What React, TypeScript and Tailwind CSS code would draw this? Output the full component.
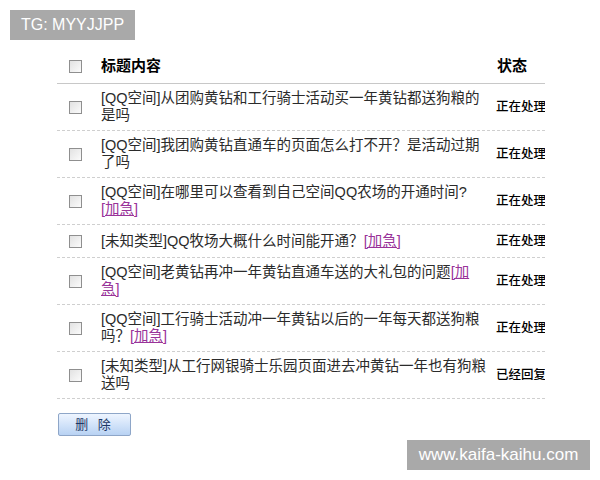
type Row = { first: React.ReactNode; second: React.ReactNode; status: string };

const Urgent = ({ children }: { children: React.ReactNode }) => (
  <a href="#" className="text-[#993399] underline">{children}</a>
);

const rows: Row[] = [
  { first: '[QQ空间]从团购黄钻和工行骑士活动买一年黄钻都送狗粮的', second: '是吗', status: '正在处理' },
  { first: '[QQ空间]我团购黄钻直通车的页面怎么打不开？是活动过期', second: '了吗', status: '正在处理' },
  { first: '[QQ空间]在哪里可以查看到自己空间QQ农场的开通时间?', second: <Urgent>[加急]</Urgent>, status: '正在处理' },
  { first: <>[未知类型]QQ牧场大概什么时间能开通？<Urgent>[加急]</Urgent></>, second: null, status: '正在处理' },
  {
    first: <>[QQ空间]老黄钻再冲一年黄钻直通车送的大礼包的问题<Urgent>[加</Urgent></>,
    second: <Urgent>急]</Urgent>,
    status: '正在处理',
  },
  { first: '[QQ空间]工行骑士活动冲一年黄钻以后的一年每天都送狗粮', second: <>吗？<Urgent>[加急]</Urgent></>, status: '正在处理' },
  { first: '[未知类型]从工行网银骑士乐园页面进去冲黄钻一年也有狗粮', second: '送吗', status: '已经回复' },
];

function Box() {
  return (
    <span className="block w-[13px] h-[13px] border border-[#8f8f8f] bg-gradient-to-br from-[#e2e2e2] to-[#fbfbfb]" />
  );
}

export default function App() {
  return (
    <div
      className="relative w-[600px] h-[480px] bg-white overflow-hidden"
      style={{ fontFamily: '"Liberation Sans", "Noto Sans CJK SC", sans-serif' }}
    >
      {/* watermark top */}
      <div className="absolute left-[10px] top-[10px] w-[125px] h-[30px] bg-[#a9a9a9] text-white text-[16px] leading-[30px] pl-[11px]">
        TG: MYYJJPP
      </div>

      <div className="pt-[50px] pl-[57px]">
        <div className="w-[488px] overflow-hidden">
          {/* header */}
          <div className="grid grid-cols-[44px_394px_1fr] items-center h-[34px] border-b border-[#c8c8c8]">
            <div className="pl-[12px]"><Box /></div>
            <div className="text-[15px] font-bold text-black">标题内容</div>
            <div className="pl-[2px] text-[15px] font-bold text-black whitespace-nowrap">状态</div>
          </div>

          {rows.map((r, i) => (
            <div
              key={i}
              className="grid grid-cols-[44px_394px_1fr] items-center min-h-[33px] py-[6px] border-b border-dashed border-[#cfcfcf]"
            >
              <div className="pl-[12px]"><Box /></div>
              <div className="text-[14.5px] leading-[17px] text-[#2b2b2b]">
                {r.first}
                {r.second && (
                  <>
                    <br />
                    {r.second}
                  </>
                )}
              </div>
              <div className="pl-[1px] text-[12.5px] font-medium text-black whitespace-nowrap">{r.status}</div>
            </div>
          ))}
        </div>

        <button className="mt-[14px] ml-px w-[73px] h-[23px] border border-[#8ea6c8] rounded-[2px] bg-gradient-to-b from-[#eef5ff] to-[#b8d2f3] text-[13px] text-[#1d3766] tracking-[3px]">
          删 除
        </button>
      </div>

      {/* watermark bottom */}
      <div className="absolute left-[407px] top-[440px] w-[183px] h-[30px] bg-[#a9a9a9] text-white text-[17px] leading-[30px] text-center">
        www.kaifa-kaihu.com
      </div>
    </div>
  );
}
